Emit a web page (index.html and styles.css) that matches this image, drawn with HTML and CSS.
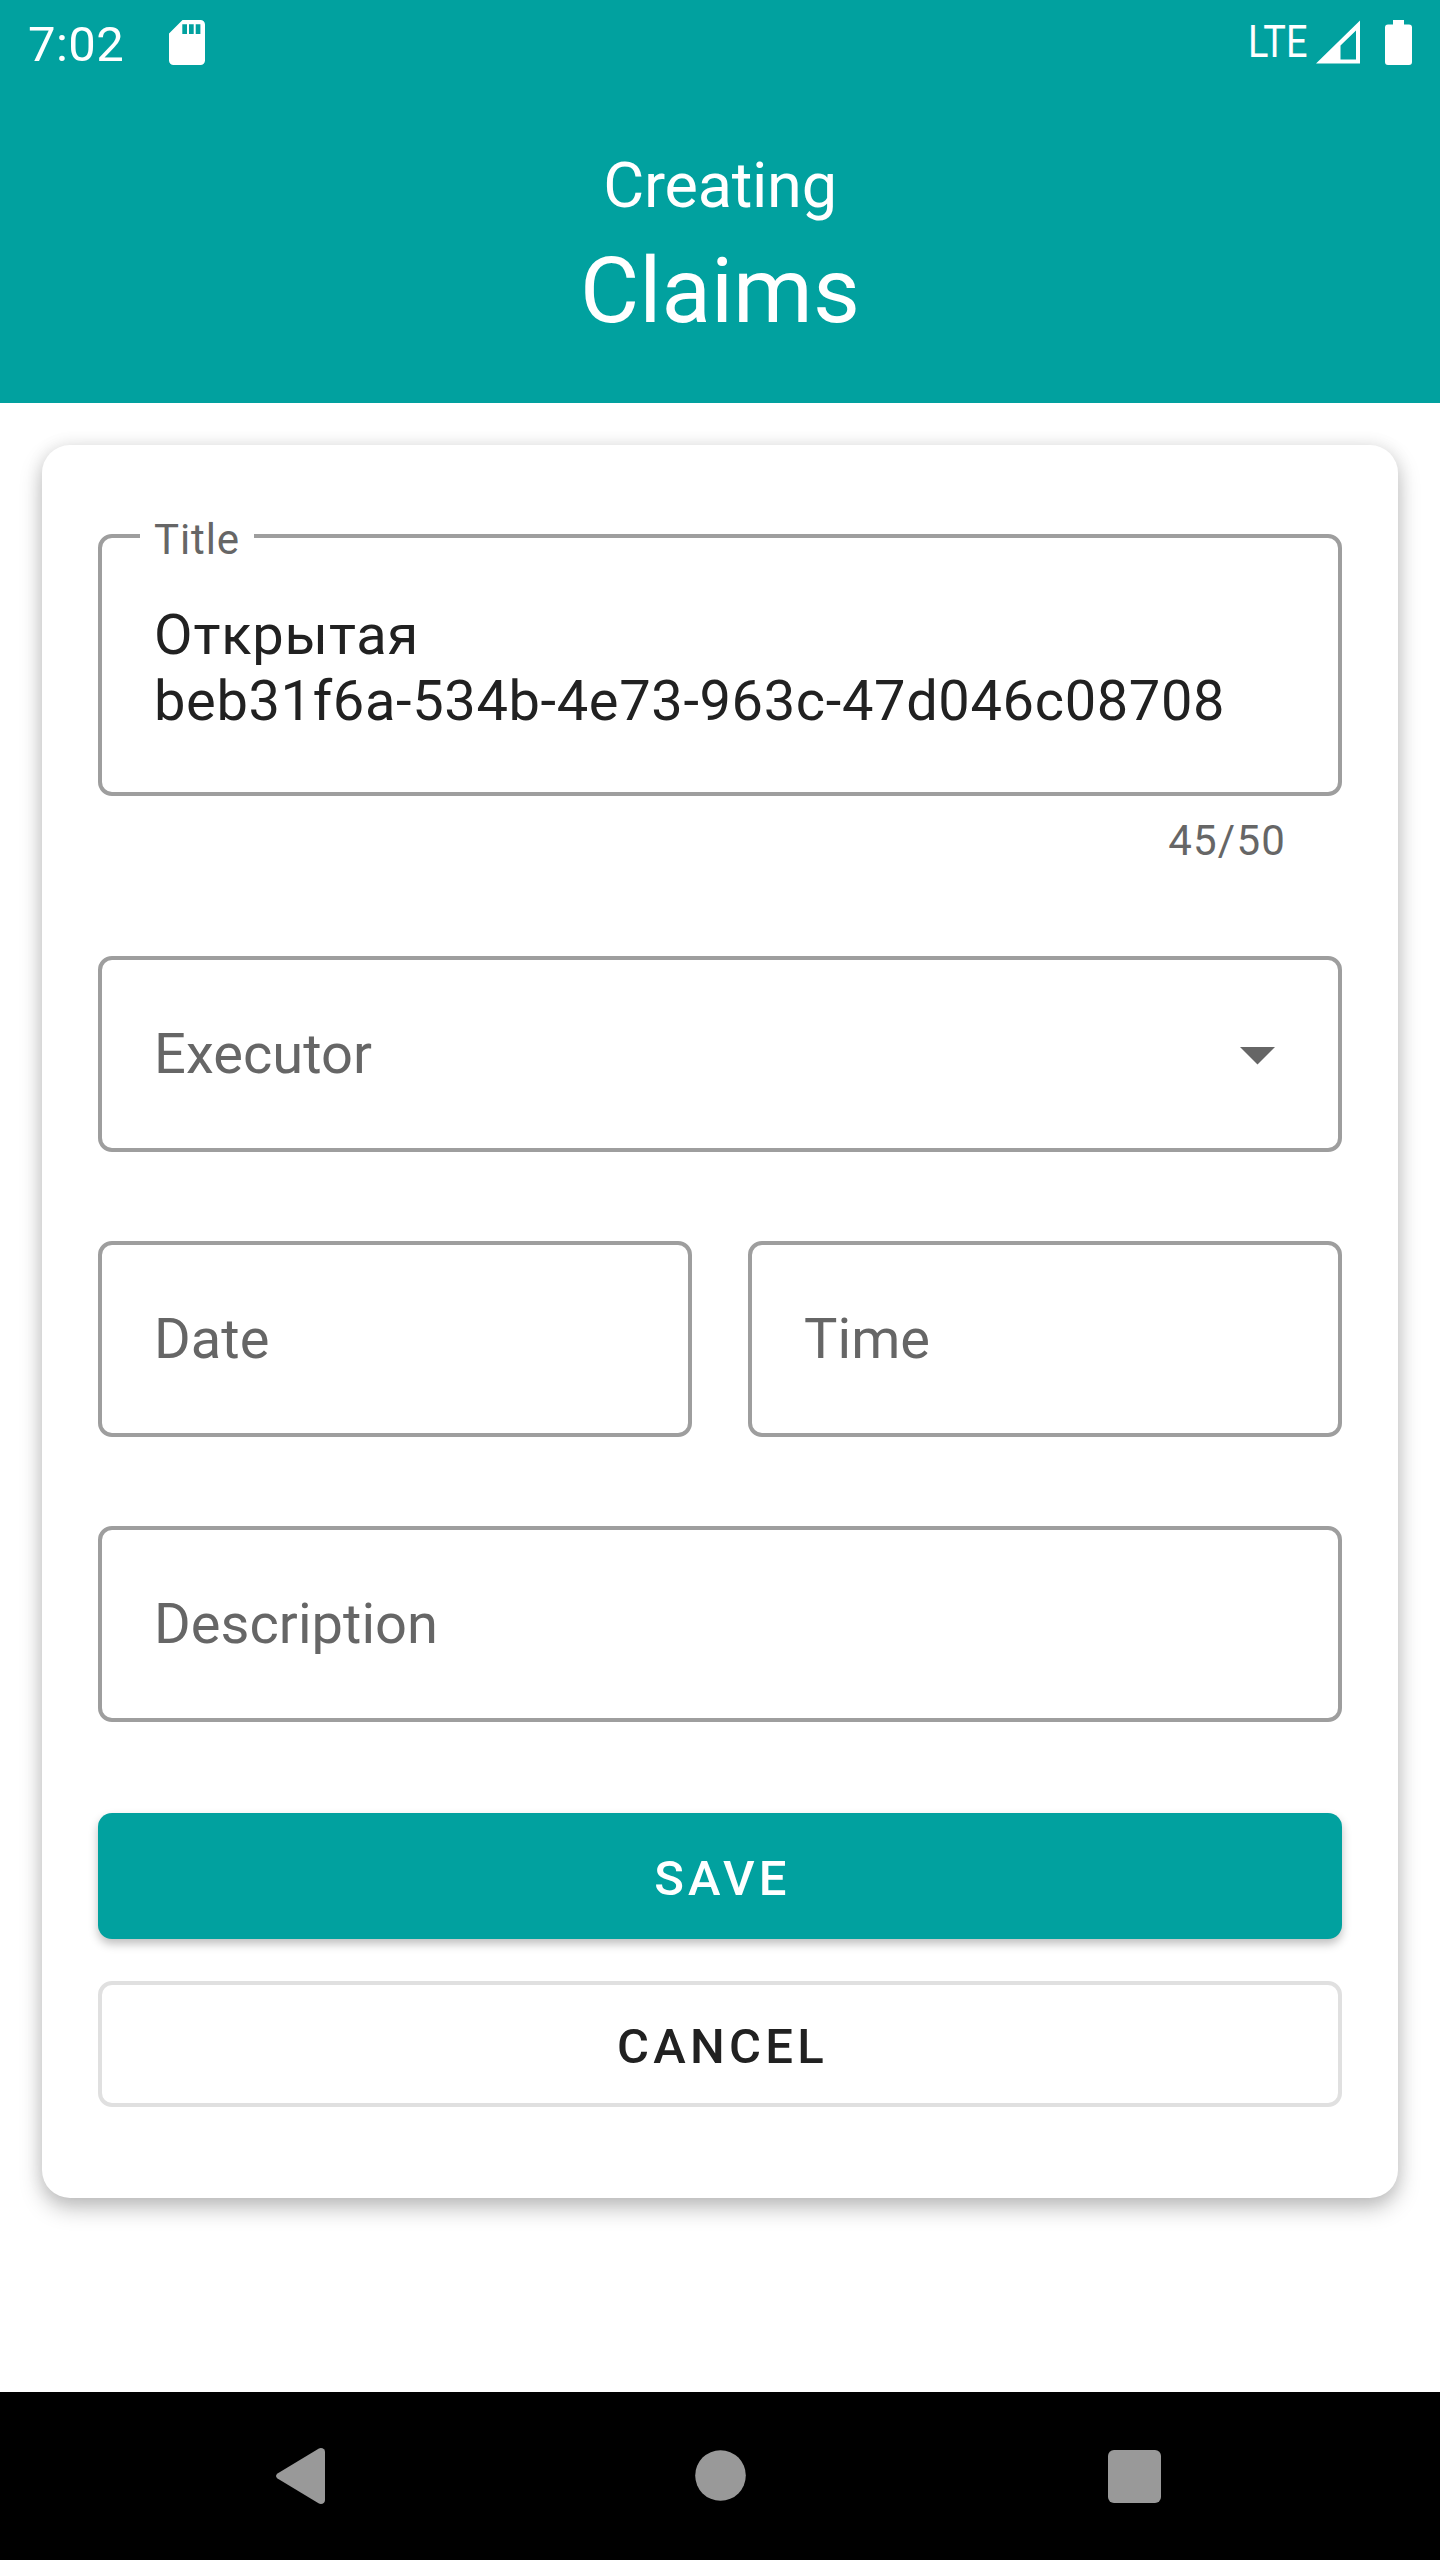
FILE: index.html
```html
<!DOCTYPE html>
<html lang="en">
<head>
<meta charset="utf-8">
<title>Creating Claims</title>
<link rel="stylesheet" href="styles.css">
</head>
<body>
<div class="screen">
  <header class="header">
    <div class="status">
      <span class="clock">7:02</span>
      <svg class="sd" viewBox="0 0 36 45"><path fill="#fff" fill-rule="evenodd" d="M13.500 0H31.500a4.500 4.500 0 0 1 4.500 4.500V40.500a4.500 4.500 0 0 1-4.500 4.500H4.500a4.500 4.500 0 0 1-4.500-4.500V13.500zM13.300 4.200V14h4.700V4.200zM20 4.200V14h4.700V4.200zM26.700 4.200V14h4.700V4.200z"/></svg>
      <span class="spacer"></span>
      <span class="lte"><span class="lte-text">LTE</span></span>
      <svg class="signal" viewBox="0 0 44.500 43.500"><path fill="#fff" fill-rule="evenodd" d="M0 43.500L44.500 0V43.500zM24.500 39.500H40V10.500L24.500 25.500z"/></svg>
      <svg class="battery" viewBox="0 0 27 45"><path fill="#fff" d="M8 0H19V4.500H24a3 3 0 0 1 3 3V42a3 3 0 0 1-3 3H3a3 3 0 0 1-3-3V7.500a3 3 0 0 1 3-3H8z"/></svg>
    </div>
    <div class="heading">
      <div class="subtitle">Creating</div>
      <h1 class="title">Claims</h1>
    </div>
  </header>
  <main class="content">
    <form class="card">
      <div class="field field-filled">
        <span class="float-label">Title</span>
        <span class="value"><span class="word">Открытая</span><br>beb31f6a-534b-4e73-963c-47d046c08708</span>
      </div>
      <div class="counter">45/50</div>
      <div class="field select">
        <span>Executor</span>
        <svg class="arrow" viewBox="0 0 35 17.500"><path fill="#666" d="M0 0H35L17.500 17.500z"/></svg>
      </div>
      <div class="row">
        <div class="field">Date</div>
        <div class="field">Time</div>
      </div>
      <div class="field">Description</div>
      <div class="actions">
        <button type="button" class="button primary">SAVE</button>
        <button type="button" class="button outlined">CANCEL</button>
      </div>
    </form>
  </main>
  <nav class="navbar">
    <svg class="nav-back" viewBox="0 0 49 56"><path fill="#999" d="M1.500 25.500L42.500 .7Q45.500 -.7 48 1.300Q49 2.500 49 4V52Q49 53.500 48 54.700Q45.500 56.700 42.500 55.300L1.500 30.500Q-1.500 28 1.500 25.500z"/></svg>
    <svg class="nav-home" viewBox="0 0 51 51"><circle cx="25.500" cy="25.500" r="25.300" fill="#999"/></svg>
    <svg class="nav-recent" viewBox="0 0 53 53"><rect width="53" height="53" rx="6" fill="#999"/></svg>
  </nav>
</div>
</body>
</html>
```

FILE: styles.css
```css
* { box-sizing: border-box; }
body { margin: 0; background: #fff; font-family: Roboto, sans-serif; }
svg { display: block; flex: none; }

.screen { width: 1440px; height: 2560px; display: flex; flex-direction: column; overflow: hidden; }

.header { height: 403px; background: #01a19f; color: #fff; }
.status { display: flex; align-items: flex-start; height: 84px; padding: 0 28px; }
.clock { font-size: 49px; line-height: 58px; padding-top: 16px; width: 141px; letter-spacing: .4px; }
.sd { width: 36px; height: 45px; margin-top: 20px; }
.spacer { flex: 1; }
.lte { width: 68px; font-size: 43.5px; line-height: 50px; padding-top: 18px; }
.lte-text { display: inline-block; transform: scaleX(.87); transform-origin: left; }
.signal { width: 44.500px; height: 43.500px; margin-top: 20px; }
.battery { width: 27px; height: 45px; margin: 19.500px 0 0 25px; }

.heading { text-align: center; padding-top: 65px; }
.subtitle { font-size: 63px; line-height: 74px; letter-spacing: -.25px; }
.title { margin: 14px 0 0; font-size: 91px; font-weight: 400; line-height: 108px; }

.content { flex: 1; padding: 42px 42px 0; }
.card {
  height: 1753px; padding: 89px 56px 0; border-radius: 28px; background: #fff;
  box-shadow: 0 10px 22px rgba(0, 0, 0, .25), 0 0 18px rgba(0, 0, 0, .08);
}
.field {
  position: relative; display: flex; align-items: center; flex: 1; height: 196px;
  padding: 0 52px; border: 4px solid #9e9e9e; border-radius: 14px;
  font-size: 56px; line-height: 66px; letter-spacing: .05px; color: #666;
}
.field-filled { height: 262px; padding-top: 6px; color: #212121; letter-spacing: .64px; }
.word { letter-spacing: .85px; }
.float-label {
  position: absolute; left: 38px; top: -23px; width: 114px; padding-left: 14px;
  background: #fff; color: #666; font-size: 42px; line-height: 50px; letter-spacing: .9px;
}
.counter {
  height: 160px; padding: 20px 56px 0; text-align: right; color: #666;
  font-size: 42px; line-height: 50px; letter-spacing: 1.2px;
}
.select { justify-content: space-between; }
.arrow { width: 35px; height: 17.500px; margin: 4px 11px 0 0; }
.row { display: flex; gap: 56px; margin: 89px 0; }

.actions { display: flex; flex-direction: column; gap: 42px; margin-top: 91px; }
.button {
  height: 126px; padding: 5px 0 0 5px; border: 0; border-radius: 14px; font-family: inherit;
  font-size: 49px; font-weight: 500; line-height: 58px; letter-spacing: 4.3px;
}
.primary { background: #01a19f; color: #fff; box-shadow: 0 5px 10px rgba(0, 0, 0, .25); }
.outlined { background: #fff; color: #212121; border: 4px solid #e0e0e0; }

.navbar { display: flex; align-items: center; height: 168px; padding-left: 276px; background: #000; }
.nav-back { width: 49px; height: 56px; }
.nav-home { width: 51px; height: 51px; margin: 0 0 1px 369.500px; }
.nav-recent { width: 53px; height: 53px; margin-left: 362.500px; }
```
